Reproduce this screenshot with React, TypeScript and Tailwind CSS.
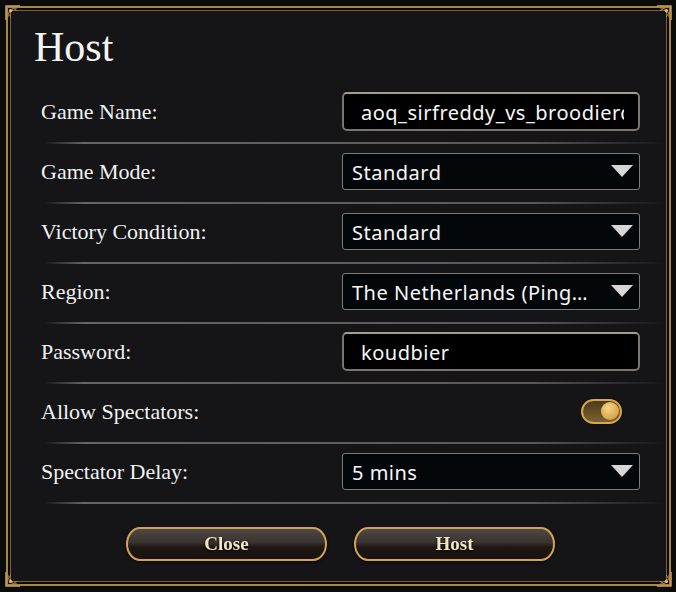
import React from "react";

const serif = "font-['Liberation_Serif','Times_New_Roman',serif]";
const sans = "font-['Noto_Sans','Open_Sans',sans-serif]";

function Corner({ className }: { className: string }) {
    // small gold filigree in the frame corners
    return (
        <svg width="16" height="16" viewBox="0 0 16 16" className={"absolute " + className}>
            <path d="M1 15 L1 1 L15 1" fill="none" stroke="#c9a058" strokeWidth="1.5" />
            <path d="M3 12 C3 6 6 3 12 3" fill="none" stroke="#b68a42" strokeWidth="1" />
            <path d="M4 8 C6 8 8 6 8 4 C7 6 5 7 4 8 Z" fill="#d8b066" />
            <circle cx="5.5" cy="5.5" r="1.6" fill="#e0bb70" />
            <path d="M9 5 C10 4 12 5 11 6" fill="none" stroke="#d8b066" strokeWidth="0.8" />
            <path d="M5 9 C4 10 5 12 6 11" fill="none" stroke="#d8b066" strokeWidth="0.8" />
        </svg>
    );
}

function Separator() {
    return <div className="h-[2px] bg-[linear-gradient(to_right,transparent_5%,rgba(115,115,115,0.85)_11%,rgba(105,105,105,0.8)_80%,transparent_100%)]" />;
}

function Row({ label, children }: { label: string; children: React.ReactNode }) {
    return (
        <>
            <div className="h-[58px] flex items-center justify-between pl-[30px] pr-[26px] pb-[4px]">
                <span className={`${serif} text-[22px] text-[#f1f1f1]`}>{label}</span>
                {children}
            </div>
            <Separator />
        </>
    );
}

function TextField({ value }: { value: string }) {
    return (
        <div className="w-[298px] h-[39px] bg-black rounded-[5px] border-2 border-[#7b766b] border-t-[#a59e90] flex items-center pt-[3px] pl-[17px] pr-[14px] overflow-hidden">
            <span className={`${sans} block overflow-hidden text-[20px] tracking-[0.5px] text-[#f7f7f7] whitespace-nowrap`}>{value}</span>
        </div>
    );
}

function Select({ value }: { value: string }) {
    return (
        <div className="w-[298px] h-[37px] bg-[#04070a] rounded-[3px] border border-[#7c7c7c] flex items-center pl-[9px] pr-[6px]">
            <span className={`${sans} flex-1 pt-[3px] text-[20px] tracking-[0.5px] text-[#f7f7f7] whitespace-nowrap overflow-hidden`}>{value}</span>
            <svg width="22" height="12" viewBox="0 0 22 12">
                <polygon points="0,0 22,0 11,12" fill="#d6d6d6" />
            </svg>
        </div>
    );
}

function Toggle() {
    return (
        <div className="mr-[18px] w-[41px] h-[25px] rounded-full border-2 border-[#d6a74c] bg-[linear-gradient(to_bottom,#4e3a1a,#7a6131)] flex items-center justify-end pr-[1px] shadow-[0_0_2px_rgba(0,0,0,0.8)]">
            <div className="w-[18px] h-[18px] rounded-full bg-[radial-gradient(circle_at_40%_35%,#f6d488,#d8a548_70%,#b3832e)]" />
        </div>
    );
}

function GoldButton({ label }: { label: string }) {
    return (
        <button className="w-[201px] h-[34px] rounded-[14px/50%] border-2 border-[#d3a352] bg-[linear-gradient(to_bottom,#4d4946_0%,#39332f_45%,#1f1714_60%,#1a1210_100%)] flex items-center justify-center shadow-[0_1px_3px_rgba(0,0,0,0.8)]">
            <span className={`${serif} font-bold text-[19px] text-[#f2e6c6] drop-shadow-[0_1px_1px_rgba(0,0,0,0.9)]`}>{label}</span>
        </button>
    );
}

export default function App() {
    return (
        <div className="w-[676px] h-[592px] bg-[#0b0b0b] pt-[6px] pb-[6px] pl-[6px] pr-[5px]">
            <div className="relative h-full border-2 border-[#a88448] bg-[#0a0907] p-[2px]">
                <div className="h-full border border-[#7d6235]">
                    <div className="h-full bg-[#151518] flex flex-col">
                        <div className={`${serif} pl-[23px] pt-[15px] h-[73px] text-[42px] leading-[42px] text-[#f4f4f4]`}>Host</div>

                        <Row label="Game Name:">
                            <TextField value="aoq_sirfreddy_vs_broodierd" />
                        </Row>
                        <Row label="Game Mode:">
                            <Select value="Standard" />
                        </Row>
                        <Row label="Victory Condition:">
                            <Select value="Standard" />
                        </Row>
                        <Row label="Region:">
                            <Select value="The Netherlands (Ping…" />
                        </Row>
                        <Row label="Password:">
                            <TextField value="koudbier" />
                        </Row>
                        <Row label="Allow Spectators:">
                            <Toggle />
                        </Row>
                        <Row label="Spectator Delay:">
                            <Select value="5 mins" />
                        </Row>

                        <div className="flex gap-[27px] pl-[115px] mt-[23px]">
                            <GoldButton label="Close" />
                            <GoldButton label="Host" />
                        </div>
                    </div>
                </div>
                <Corner className="-top-[3px] -left-[3px]" />
                <Corner className="-top-[3px] -right-[3px] scale-x-[-1]" />
                <Corner className="-bottom-[3px] -left-[3px] scale-y-[-1]" />
                <Corner className="-bottom-[3px] -right-[3px] scale-[-1]" />
            </div>
        </div>
    );
}
